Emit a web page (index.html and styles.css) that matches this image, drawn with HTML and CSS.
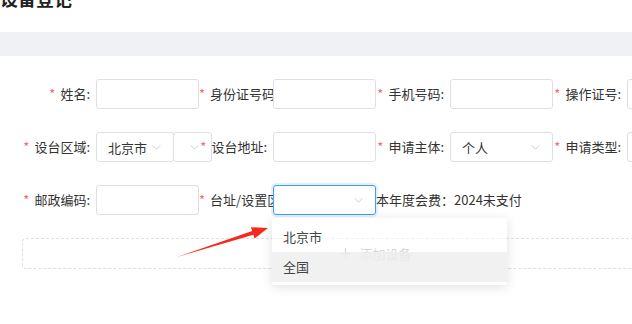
FILE: index.html
```html
<!DOCTYPE html>
<html>
  <head>
    <meta charset="utf-8">
    <title>设备登记</title>
    <link rel="stylesheet" href="styles.css">
  </head>
  <body>
    <div class="page">
      <div class="head">
        <h1 class="title">设备登记</h1>
      </div>
      <div class="band"></div>

      <form class="form">
        <div class="row">
          <div class="item">
            <label class="label"><i class="req">*</i>姓名:</label>
            <div class="control"><span class="input"></span></div>
          </div>
          <div class="item">
            <label class="label"><i class="req">*</i>身份证号码:</label>
            <div class="control"><span class="input"></span></div>
          </div>
          <div class="item">
            <label class="label"><i class="req">*</i>手机号码:</label>
            <div class="control"><span class="input"></span></div>
          </div>
          <div class="item">
            <label class="label"><i class="req">*</i>操作证号:</label>
            <div class="control"><span class="input"></span></div>
          </div>
        </div>

        <div class="row">
          <div class="item">
            <label class="label"><i class="req">*</i>设台区域:</label>
            <div class="control">
              <span class="input select city">北京市<svg class="chev" viewBox="0 0 10 6"><polyline points="0.5,0.5 5,5 9.5,0.5"/></svg></span>
              <span class="input select district"><svg class="chev" viewBox="0 0 10 6"><polyline points="0.5,0.5 5,5 9.5,0.5"/></svg></span>
            </div>
          </div>
          <div class="item">
            <label class="label"><i class="req">*</i>设台地址:</label>
            <div class="control"><span class="input"></span></div>
          </div>
          <div class="item">
            <label class="label"><i class="req">*</i>申请主体:</label>
            <div class="control">
              <span class="input select">个人<svg class="chev" viewBox="0 0 10 6"><polyline points="0.5,0.5 5,5 9.5,0.5"/></svg></span>
            </div>
          </div>
          <div class="item">
            <label class="label"><i class="req">*</i>申请类型:</label>
            <div class="control"><span class="input select"></span></div>
          </div>
        </div>

        <div class="row">
          <div class="item">
            <label class="label"><i class="req">*</i>邮政编码:</label>
            <div class="control"><span class="input"></span></div>
          </div>
          <div class="item">
            <label class="label"><i class="req">*</i>台址/设置区域:</label>
            <div class="control">
              <span class="input select focus"><svg class="chev" viewBox="0 0 10 6"><polyline points="0.5,0.5 5,5 9.5,0.5"/></svg></span>
              <ul class="dropdown">
                <li>北京市</li>
                <li class="hover">全国</li>
              </ul>
            </div>
          </div>
          <div class="note">本年度会费：2024未支付</div>
        </div>

        <div class="add">
          <svg class="plus" viewBox="0 0 11 11"><path d="M5.5 0v11M0 5.5h11"/></svg>
          <span>添加设备</span>
        </div>
      </form>

      <svg class="arrow" viewBox="0 0 632 324">
        <polygon points="177,257 252.2,231 251,227.2 268,228 254.6,238.6 253.4,234.8"/>
      </svg>
    </div>
  </body>
</html>
```

FILE: styles.css
```css
html,
body {
  margin: 0;
  overflow: hidden;
  background: #fff;
}
body {
  font-family: "Noto Sans CJK SC", "Noto Sans", sans-serif;
  font-size: 13px;
  color: #333;
}
.page {
  position: relative;
  width: 632px;
  height: 324px;
  overflow: hidden;
}
.head {
  display: flow-root;
  height: 32px;
}
.title {
  margin: -14px 0 0;
  font-size: 18px;
  line-height: 24px;
  font-weight: bold;
  color: #222;
}
.band {
  height: 24px;
  background: #f0f1f5;
}

/* form grid */
.form {
  padding: 23px 0 0 22px;
  margin: 0;
}
.row {
  display: flex;
  height: 30px;
  margin-bottom: 23px;
}
.item {
  flex: none;
  width: 177px;
  display: flex;
  align-items: center;
}
.label {
  position: relative;
  flex: none;
  width: 74px;
  box-sizing: border-box;
  padding-right: 6px;
  text-align: right;
  white-space: nowrap;
  line-height: 30px;
}
.colon {
  margin-left: 1px;
}
.req {
  font-style: normal;
  color: #f56c6c;
  margin-right: 5px;
}
.control {
  position: relative;
  flex: none;
  display: flex;
  width: 103px;
  height: 30px;
}
.input {
  position: relative;
  flex: none;
  display: flex;
  align-items: center;
  width: 103px;
  height: 30px;
  box-sizing: border-box;
  padding-left: 11px;
  border: 1px solid #dcdfe6;
  border-radius: 3px;
  background: #fff;
}
.select.city {
  width: 78px;
}
.select.district {
  width: 39px;
  margin-left: -1px;
}
.chev {
  position: absolute;
  right: 12px;
  top: 12px;
  width: 9px;
  height: 5px;
  fill: none;
  stroke: #c0c4cc;
  stroke-width: 1;
}
.focus {
  border-color: #409eff;
  box-shadow: 0 0 0 2px rgba(64, 158, 255, 0.15);
}
.note {
  flex: none;
  line-height: 30px;
  white-space: nowrap;
}

/* open select menu */
.dropdown {
  position: absolute;
  z-index: 10;
  left: -1px;
  top: 33px;
  width: 235px;
  margin: 0;
  padding: 4px 0 3px;
  list-style: none;
  background: rgba(255, 255, 255, 0.6);
  border-radius: 2px;
  box-shadow: 0 2px 12px rgba(0, 0, 0, 0.12);
}
.dropdown li {
  height: 30px;
  line-height: 30px;
  padding-left: 11px;
  color: #444;
}
.dropdown li.hover {
  background: rgba(238, 238, 238, 0.8);
}

.add {
  width: 708px;
  height: 31px;
  box-sizing: border-box;
  border: 1px dashed #dcdfe6;
  border-radius: 4px;
  display: flex;
  align-items: center;
  justify-content: center;
  gap: 8px;
  color: #999;
}
.plus {
  width: 11px;
  height: 11px;
  stroke: #999;
  stroke-width: 1.2;
}

.arrow {
  position: absolute;
  left: 0;
  top: 0;
  width: 632px;
  height: 324px;
  pointer-events: none;
  fill: #f42a1e;
}
```
